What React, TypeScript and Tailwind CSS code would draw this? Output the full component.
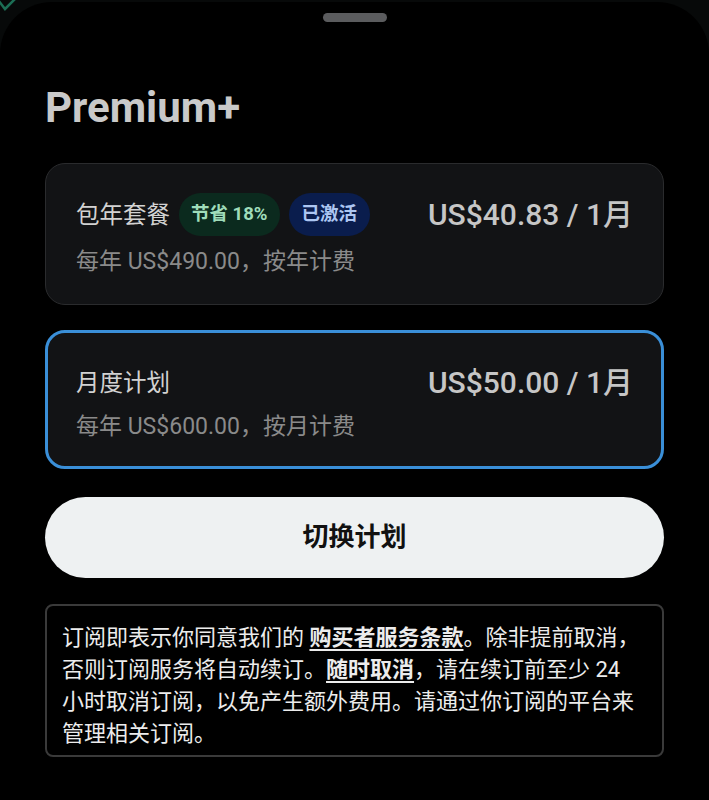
const FONT = "font-['Roboto','Noto_Sans_CJK_SC',sans-serif]";

type Plan = {
  name: string;
  price: string;
  note: string;
  selected?: boolean;
  badges?: { label: string; tone: "green" | "blue" }[];
};

const PLANS: Plan[] = [
  {
    name: "包年套餐",
    price: "US$40.83 / 1月",
    note: "每年 US$490.00，按年计费",
    badges: [
      { label: "节省 18%", tone: "green" },
      { label: "已激活", tone: "blue" },
    ],
  },
  {
    name: "月度计划",
    price: "US$50.00 / 1月",
    note: "每年 US$600.00，按月计费",
    selected: true,
  },
];

function PlanCard({ plan }: { plan: Plan }) {
  return (
    <div
      className={
        plan.selected
          ? "rounded-[20px] border-[3px] border-[#3a8fd8] bg-[#121315] pl-[28px] pr-[28px] pt-[29px] pb-[24px]"
          : "rounded-[20px] border border-[#2a2b2d] bg-[#121315] pl-[30px] pr-[30px] pt-[29px] pb-[27px]"
      }
    >
      <div className="flex min-h-[42px] items-center justify-between">
        <div className="flex items-center">
          <span className="text-[23.5px] leading-[30px] text-[#d2d2d2]">{plan.name}</span>
          {plan.badges && (
            <div className="ml-[9px] flex items-center gap-[9px]">
              {plan.badges.map((b) => (
                <span
                  key={b.label}
                  className={
                    b.tone === "green"
                      ? "flex h-[43px] items-center rounded-full bg-[#0b2a1e] px-[12px] text-[18.5px] font-bold text-[#9fdcba]"
                      : "flex h-[43px] items-center rounded-full bg-[#0a1d4d] px-[13px] text-[18.5px] font-bold text-[#acc6f2]"
                  }
                >
                  {b.label}
                </span>
              ))}
            </div>
          )}
        </div>
        <span className="text-[30px] font-medium leading-[36px] text-[#c6c6c6]">{plan.price}</span>
      </div>
      <div
        className={
          plan.selected
            ? "mt-[8px] text-[23px] leading-[30px] text-[#8a8a8a]"
            : "mt-[11px] text-[23px] leading-[30px] text-[#8a8a8a]"
        }
      >
        {plan.note}
      </div>
    </div>
  );
}

export default function App() {
  return (
    <div className={`${FONT} relative h-[800px] w-[709px] overflow-hidden bg-[#070909]`}>
      {/* page behind the sheet */}
      <svg className="absolute left-[-4px] top-[-8px]" width="26" height="22" viewBox="0 0 26 22" fill="none">
        <path d="M2 8 L9 17 L24 2" stroke="#1c6e55" strokeWidth="2.5" />
      </svg>

      <div className="relative mt-[2px] flex h-[798px] flex-col rounded-t-[52px] bg-black px-[45px]">
        <div className="mx-auto mt-[11px] h-[9px] w-[64px] rounded-full bg-[#5b5c5e]" />

        <h1 className="mt-[62px] text-[42px] font-bold leading-[48px] text-[#c9c9c9]">Premium+</h1>

        <div className="mt-[31px] flex flex-col gap-[25px]">
          {PLANS.map((p) => (
            <PlanCard key={p.name} plan={p} />
          ))}
        </div>

        <button className="mt-[28px] h-[81px] w-full rounded-full bg-[#eef1f2] text-[26px] font-bold text-[#111]">
          切换计划
        </button>

        <div className="mt-[26px] rounded-[8px] border-2 border-[#3a3a3a] pl-[15px] pr-[12px] pt-[16px] pb-[5px] text-[22px] leading-[32px] text-[#ececec]">
          订阅即表示你同意我们的 <span className="font-bold underline underline-offset-[4px]">购买者服务条款</span>。除非提前取消，
          <br />
          否则订阅服务将自动续订。<span className="font-bold underline underline-offset-[4px]">随时取消</span>，请在续订前至少 24
          <br />
          小时取消订阅，以免产生额外费用。请通过你订阅的平台来
          <br />
          管理相关订阅。
        </div>
      </div>
    </div>
  );
}
